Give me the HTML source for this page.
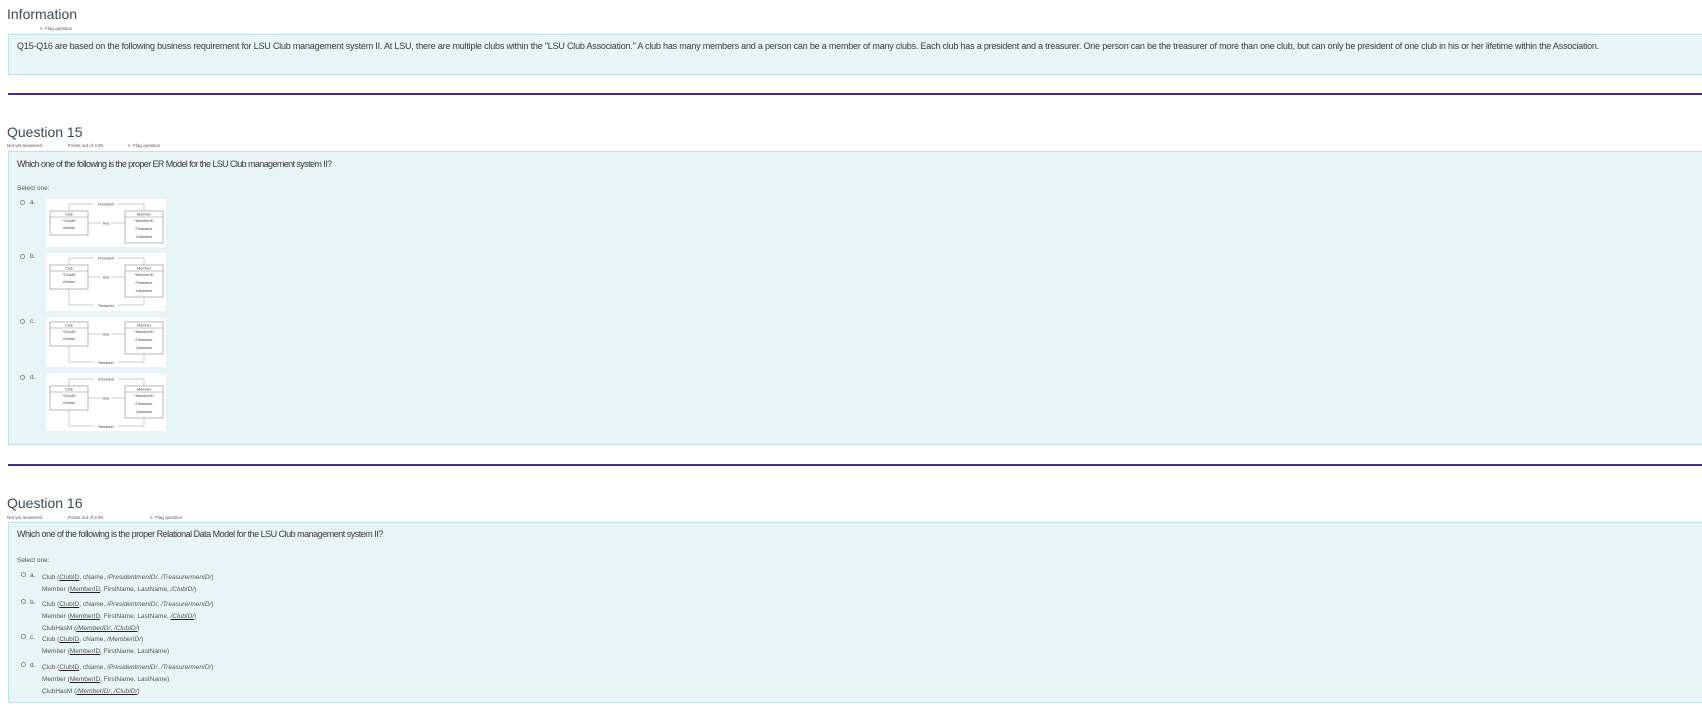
<!DOCTYPE html>
<html><head><meta charset="utf-8"><style>
*{margin:0;padding:0;box-sizing:border-box}
body{width:1702px;height:711px;background:#fff;position:relative;overflow:hidden;font-family:"Liberation Sans",sans-serif;color:#333}
.a{position:absolute;white-space:nowrap}
.h{font-size:14px;color:#3c4a55;line-height:16px}
.fl{font-size:4.5px;color:#556}
.box{position:absolute;left:8px;right:0;background:#e7f5f7;border:1px solid #bde2ea;border-right:none}
.line{position:absolute;left:8px;right:0;height:1.5px;background:#4b2c8f}
.q{font-size:9px;letter-spacing:-0.5px;color:#3a3a3a;line-height:11px}
.s{font-size:6.5px;color:#555;line-height:8px}
.r{position:absolute;width:5px;height:5px;border:0.7px solid #888;border-radius:50%;background:#fff}
.er{position:absolute;left:46px;background:#fff}
u{text-decoration:underline;text-decoration-color:#223}
</style></head><body>

<div class="a h" style="left:7px;top:6px">Information</div>
<div class="a fl" style="left:40px;top:26px">⊩ Flag question</div>
<div class="box" style="top:34px;height:41px"></div>
<div class="a q" style="left:17px;top:41px;letter-spacing:-0.2px">Q15-Q16 are based on the following business requirement for LSU Club management system II. At LSU, there are multiple clubs within the "LSU Club Association." A club has many members and a person can be a member of many clubs. Each club has a president and a treasurer. One person can be the treasurer of more than one club, but can only be president of one club in his or her lifetime within the Association.</div>
<div class="line" style="top:93px"></div>

<div class="a h" style="left:7px;top:124px">Question 15</div>
<div class="a fl" style="left:7px;top:143px">Not yet answered</div>
<div class="a fl" style="left:68px;top:143px">Points out of 3.00</div>
<div class="a fl" style="left:128px;top:143px">⊩ Flag question</div>
<div class="box" style="top:151px;height:294px"></div>
<div class="a q" style="left:17px;top:159px;letter-spacing:-0.6px">Which one of the following is the proper ER Model for the LSU Club management system II?</div>
<div class="a s" style="left:17px;top:185px">Select one:</div>

<svg width="0" height="0" style="position:absolute"><defs>
<g id="base" font-family="Liberation Sans" font-size="3.8" fill="#444" text-anchor="middle">
<rect x="4" y="12" width="38" height="24" fill="none" stroke="#888" stroke-width=".6"/>
<line x1="4" y1="18" x2="42" y2="18" stroke="#888" stroke-width=".5"/>
<text x="23" y="16.5">Club</text><text x="23" y="23">*ClubID</text><text x="23" y="30">cName</text>
<rect x="79" y="12" width="38" height="32" fill="none" stroke="#888" stroke-width=".6"/>
<line x1="79" y1="18" x2="117" y2="18" stroke="#888" stroke-width=".5"/>
<text x="98" y="16.5">Member</text><text x="98" y="23">*MemberID</text><text x="98" y="31">Firstname</text><text x="98" y="39">Lastname</text>
<line x1="42" y1="24" x2="79" y2="24" stroke="#999" stroke-width=".5"/>
<rect x="55" y="21.5" width="10" height="5" fill="#fff"/><text x="60" y="25.5">Has</text>
</g>
<g id="pres" font-family="Liberation Sans" font-size="3.8" fill="#444" text-anchor="middle">
<path d="M23 12V5H98V12" fill="none" stroke="#999" stroke-width=".5"/>
<rect x="48" y="2.5" width="24" height="5" fill="#fff"/><text x="60" y="6.5">President</text>
</g>
</defs></svg>

<div class="r" style="left:20px;top:200px"></div><div class="a s" style="left:30px;top:199px">a.</div>
<svg class="er" style="top:199px" width="120" height="48"><use href="#base"/><use href="#pres"/></svg>

<div class="r" style="left:20px;top:254px"></div><div class="a s" style="left:30px;top:253px">b.</div>
<svg class="er" style="top:253px" width="120" height="58"><use href="#base"/><use href="#pres"/>
<path d="M23 36V52H98V44" fill="none" stroke="#999" stroke-width=".5"/><rect x="48" y="50" width="24" height="5" fill="#fff"/><text x="60" y="54" font-family="Liberation Sans" font-size="3.8" fill="#444" text-anchor="middle">Treasurer</text></svg>

<div class="r" style="left:20px;top:319px"></div><div class="a s" style="left:30px;top:318px">c.</div>
<svg class="er" style="top:318px" width="120" height="49"><g transform="translate(0,-8)"><use href="#base"/>
<path d="M23 36V52H98V44" fill="none" stroke="#999" stroke-width=".5"/><rect x="48" y="50" width="24" height="5" fill="#fff"/><text x="60" y="54" font-family="Liberation Sans" font-size="3.8" fill="#444" text-anchor="middle">Treasurer</text></g></svg>

<div class="r" style="left:20px;top:375px"></div><div class="a s" style="left:30px;top:374px">d.</div>
<svg class="er" style="top:374px" width="120" height="57"><use href="#base"/><use href="#pres"/>
<path d="M23 36V52H98V44" fill="none" stroke="#999" stroke-width=".5"/><rect x="48" y="50" width="24" height="5" fill="#fff"/><text x="60" y="54" font-family="Liberation Sans" font-size="3.8" fill="#444" text-anchor="middle">Treasurer</text></svg>

<div class="line" style="top:464px"></div>

<div class="a h" style="left:7px;top:495px">Question 16</div>
<div class="a fl" style="left:7px;top:515px">Not yet answered</div>
<div class="a fl" style="left:68px;top:515px">Points out of 3.00</div>
<div class="a fl" style="left:150px;top:515px">⊩ Flag question</div>
<div class="box" style="top:522px;height:181px"></div>
<div class="a q" style="left:17px;top:529px">Which one of the following is the proper Relational Data Model for the LSU Club management system II?</div>
<div class="a s" style="left:17px;top:557px">Select one:</div>

<div class="r" style="left:21px;top:572px"></div><div class="a s" style="left:30px;top:572px">a.</div>
<div class="a s" style="left:42px;top:572px;line-height:12px">Club (<u>ClubID</u>, cName, <i>/PresidentmenID/</i>, <i>/TreasurermenID/</i>)<br>Member (<u>MemberID</u>, FirstName, LastName, <i>/ClubID/</i>)</div>

<div class="r" style="left:21px;top:599px"></div><div class="a s" style="left:30px;top:599px">b.</div>
<div class="a s" style="left:42px;top:599px;line-height:12px">Club (<u>ClubID</u>, cName, <i>/PresidentmenID/</i>, <i>/TreasurermenID/</i>)<br>Member (<u>MemberID</u>, FirstName, LastName, <u><i>/ClubID/</i></u>)<br>ClubHasM (<u><i>/MemberID/</i>, <i>/ClubID/</i></u>)</div>

<div class="r" style="left:21px;top:634px"></div><div class="a s" style="left:30px;top:634px">c.</div>
<div class="a s" style="left:42px;top:634px;line-height:12px">Club (<u>ClubID</u>, cName, <i>/MemberID/</i>)<br>Member (<u>MemberID</u>, FirstName, LastName)</div>

<div class="r" style="left:21px;top:662px"></div><div class="a s" style="left:30px;top:662px">d.</div>
<div class="a s" style="left:42px;top:662px;line-height:12px">Club (<u>ClubID</u>, cName, <i>/PresidentmenID/</i>, <i>/TreasurermenID/</i>)<br>Member (<u>MemberID</u>, FirstName, LastName)<br>ClubHasM (<u><i>/MemberID/</i>, <i>/ClubID/</i></u>)</div>

</body></html>
